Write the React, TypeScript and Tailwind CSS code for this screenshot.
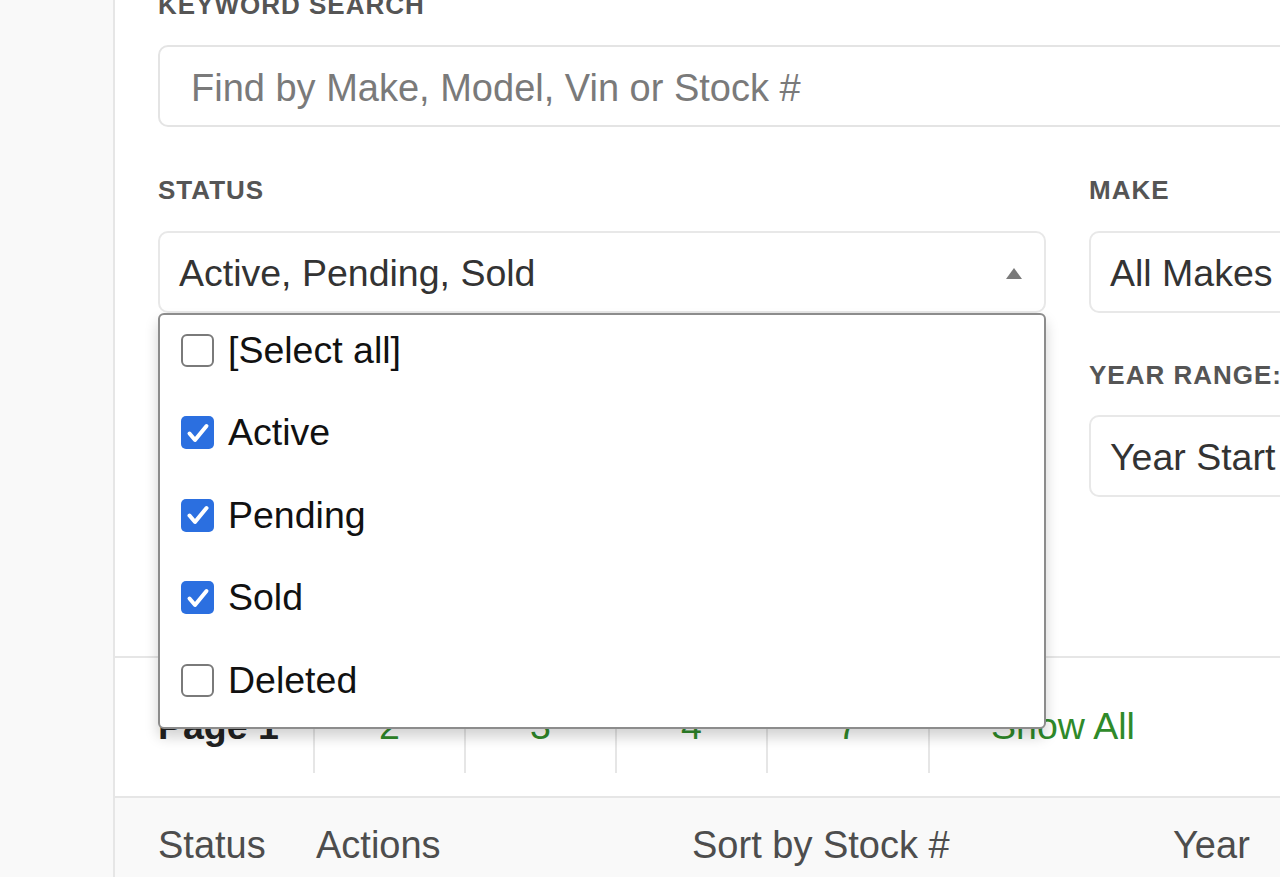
import { useState } from "react";

const statusOptions = ["Active", "Pending", "Sold", "Deleted"];

function Label({ children }: { children: React.ReactNode }) {
  return (
    <div className="text-[26px] leading-[32px] font-bold tracking-[1px] text-[#555]">
      {children}
    </div>
  );
}

function Check({ checked }: { checked: boolean }) {
  if (!checked) {
    return (
      <span className="w-[33px] h-[33px] shrink-0 rounded-[6px] border-2 border-[#7a7a7a] bg-white" />
    );
  }
  return (
    <span className="w-[33px] h-[33px] shrink-0 rounded-[5px] bg-[#2b6fe0] flex items-center justify-center">
      <svg width="24" height="24" viewBox="0 0 24 24">
        <path
          d="M3.5 12.5 L9 19 L20.5 5"
          fill="none"
          stroke="white"
          strokeWidth="4"
          strokeLinecap="round"
          strokeLinejoin="round"
        />
      </svg>
    </span>
  );
}

export default function App() {
  const [selected, setSelected] = useState<string[]>([
    "Active",
    "Pending",
    "Sold",
  ]);

  const toggle = (opt: string) => {
    setSelected((s) =>
      s.includes(opt) ? s.filter((x) => x !== opt) : [...s, opt]
    );
  };

  const pages = ["2", "3", "4", "7"];

  return (
    <div className="flex h-[877px] w-[1280px] overflow-hidden bg-white font-['Liberation_Sans',Arial,sans-serif]">
      {/* sidebar */}
      <div className="w-[115px] shrink-0 bg-[#f9f9f9] border-r-2 border-[#e6e6e6]" />

      <div className="flex-1 min-w-0">
        {/* filters */}
        <div className="pl-[43px] w-[1900px] -mt-[11px] pb-[159px]">
          <Label>KEYWORD SEARCH</Label>
          <div className="mt-[24px] w-[1819px] h-[82px] rounded-[10px] border-2 border-[#e4e4e4] pl-[31px] pt-[5px] flex items-center text-[38px] text-[#7a7a7a]">
            Find by Make, Model, Vin or Stock #
          </div>

          <div className="mt-[47px] flex gap-[43px]">
            {/* status column */}
            <div className="w-[888px]">
              <Label>STATUS</Label>
              <div className="relative mt-[25px]">
                <div className="h-[82px] rounded-[10px] border-2 border-[#e8e8e8] pl-[19px] pr-[22px] pt-[2px] flex items-center justify-between text-[37.5px] text-[#333]">
                  <span>{selected.filter((s) => statusOptions.includes(s)).join(", ")}</span>
                  <svg width="16" height="11" viewBox="0 0 16 11">
                    <polygon points="8,0 16,11 0,11" fill="#7a7a7a" />
                  </svg>
                </div>
                <div className="absolute left-0 top-full z-10 w-full rounded-[6px] border-2 border-[#8c8c8c] bg-white pt-[15px] pb-[27px] pl-[21px] flex flex-col gap-[42.5px] shadow-[0_8px_14px_rgba(0,0,0,0.18)]">
                  <div
                    className="h-[40px] flex items-center gap-[14px] text-[37.5px] text-[#111] cursor-pointer"
                    onClick={() =>
                      setSelected(
                        selected.length === statusOptions.length ? [] : statusOptions
                      )
                    }
                  >
                    <Check checked={selected.length === statusOptions.length} />
                    <span>[Select all]</span>
                  </div>
                  {statusOptions.map((opt) => (
                    <div
                      key={opt}
                      onClick={() => toggle(opt)}
                      className="h-[40px] flex items-center gap-[14px] text-[37.5px] text-[#111] cursor-pointer"
                    >
                      <Check checked={selected.includes(opt)} />
                      <span>{opt}</span>
                    </div>
                  ))}
                </div>
              </div>
            </div>

            {/* make / year column */}
            <div className="w-[888px]">
              <Label>MAKE</Label>
              <div className="mt-[25px] h-[82px] rounded-[10px] border-2 border-[#e8e8e8] pl-[19px] pt-[2px] flex items-center text-[37.5px] text-[#333]">
                All Makes
              </div>
              <div className="mt-[46px]">
                <Label>YEAR RANGE:</Label>
              </div>
              <div className="mt-[24px] h-[82px] rounded-[10px] border-2 border-[#e8e8e8] pl-[19px] pt-[2px] flex items-center text-[37.5px] text-[#333]">
                Year Start
              </div>
            </div>
          </div>
        </div>

        {/* pagination */}
        <div className="border-t-2 border-[#e6e6e6] pt-[21px] pb-[23px] pl-[43px] flex">
          <div className="w-[155px] h-[94px] flex items-center text-[37.5px] font-semibold text-[#222]">
            Page 1
          </div>
          {pages.map((p, i) => (
            <div
              key={p}
              className={`h-[94px] border-l-2 border-[#e6e6e6] flex items-center justify-center text-[37.5px] text-[#2f8a2a] ${
                i === 3 ? "w-[162px]" : "w-[151px]"
              }`}
            >
              {p}
            </div>
          ))}
          <div className="w-[268px] h-[94px] border-l-2 border-[#e6e6e6] flex items-center justify-center text-[37.5px] text-[#2f8a2a]">
            Show All
          </div>
        </div>

        {/* table header */}
        <div className="border-t-2 border-[#e6e6e6] bg-[#f9f9f9] h-[200px] pt-[24px] pl-[43px] flex text-[38px] leading-[46px] text-[#4d4d4d]">
          <span className="w-[158px]">Status</span>
          <span className="w-[376px]">Actions</span>
          <span className="w-[481px]">Sort by Stock #</span>
          <span>Year</span>
        </div>
      </div>
    </div>
  );
}
